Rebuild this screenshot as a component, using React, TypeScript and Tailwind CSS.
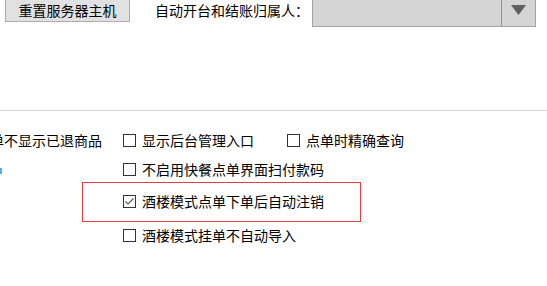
import React from "react";

function Box({ checked = false }: { checked?: boolean }) {
  return (
    <div className="w-[13px] h-[13px] border border-[#333333] bg-white flex-none flex items-center justify-center">
      {checked && (
        <svg width="11" height="11" viewBox="0 0 11 11">
          <polyline points="1.5,5.5 4,8 9.5,2.5" fill="none" stroke="#555555" strokeWidth="1.1" />
        </svg>
      )}
    </div>
  );
}

function Check({ label, checked = false }: { label: string; checked?: boolean }) {
  return (
    <div className="flex items-center h-[20px]">
      <Box checked={checked} />
      <span className="ml-[6px] whitespace-nowrap">{label}</span>
    </div>
  );
}

export default function App() {
  return (
    <div className="w-[547px] h-[286px] overflow-hidden bg-white text-black text-[14px] leading-[20px] font-['Noto_Sans_CJK_SC',sans-serif]">
      <div className="flex items-start -mt-[4px]">
        <button className="ml-[5px] w-[125px] h-[26px] bg-[#e1e1e1] border border-[#adadad] flex items-center justify-center pt-[1px] text-black">
          重置服务器主机
        </button>
        <div className="ml-[25px] w-[157px] mt-[4px] whitespace-nowrap">自动开台和结账归属人：</div>
        <div className="w-[224px] h-[31px] bg-[#d4d4d4] border border-[#a3a3a3] flex justify-end">
          <div className="w-[34px] h-full border-l border-[#8f8f8f] flex justify-center pt-[8px]">
            <svg width="15" height="10" viewBox="0 0 15 10">
              <polygon points="0,0 15,0 7.5,10" fill="#5f5f5f" />
            </svg>
          </div>
        </div>
      </div>

      <div className="mt-[83px] h-[1px] bg-[#d6d6d6]" />

      <div className="flex mt-[19px] h-[20px] items-center">
        <div className="-ml-[10px] w-[133px] whitespace-nowrap overflow-hidden">单不显示已退商品</div>
        <div className="w-[164px]">
          <Check label="显示后台管理入口" />
        </div>
        <div>
          <Check label="点单时精确查询" />
        </div>
      </div>

      <div className="flex mt-[9px] h-[20px]">
        <div className="w-[123px]">
          <div className="mt-[9px] w-[2px] h-[6px] bg-[#56adf2]" />
        </div>
        <Check label="不启用快餐点单界面扫付款码" />
      </div>

      <div className="mt-[3px] ml-[82px] w-[279px] h-[40px] border border-[#e53e3e] pl-[40px] pt-[8px]">
        <Check label="酒楼模式点单下单后自动注销" checked />
      </div>

      <div className="flex mt-[3px] pl-[123px]">
        <Check label="酒楼模式挂单不自动导入" />
      </div>
    </div>
  );
}
